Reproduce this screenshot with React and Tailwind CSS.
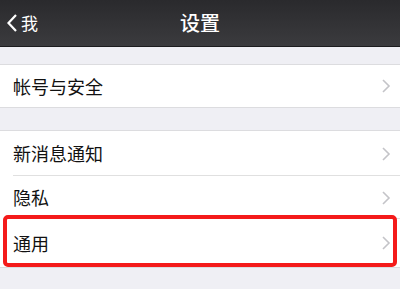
import React from "react";

const Chevron = () => (
  <svg width="10" height="16" viewBox="0 0 10 16" className="shrink-0">
    <path d="M2 2l6 6-6 6" fill="none" stroke="#c4c4c8" strokeWidth="1.6" />
  </svg>
);

const Row = ({ label, divider }) => (
  <div className="relative flex h-full items-center justify-between bg-white pl-[13px] pr-[9px]">
    <span className="text-[18px] text-[#111]">{label}</span>
    <Chevron />
    {divider && <div className="absolute bottom-0 left-[13px] right-0 h-px bg-[#e0e0e0]" />}
  </div>
);

const App = () => {
  return (
    <div
      className="h-[289px] w-[400px] overflow-hidden bg-[#efeff4]"
      style={{ fontFamily: '"Noto Sans CJK SC", "Noto Sans", sans-serif' }}
    >
      <header className="relative flex h-[47px] items-center justify-center border-b border-[#1c1c1e] bg-gradient-to-b from-[#2a2a2d] to-[#3b3b3e]">
        <div className="absolute left-[6px] top-0 flex h-full items-center gap-[3px]">
          <svg width="12" height="20" viewBox="0 0 12 20">
            <path d="M10 2L2.5 10 10 18" fill="none" stroke="#fff" strokeWidth="2.2" />
          </svg>
          <span className="text-[17px] text-white">我</span>
        </div>
        <h1 className="text-[20px] font-medium text-white">设置</h1>
      </header>

      <div className="mt-[17px] h-[44px] border-y border-[#dcdcdf]">
        <Row label="帐号与安全" />
      </div>

      <div className="mt-[22px] border-y border-[#dcdcdf]">
        <div className="h-[45px]">
          <Row label="新消息通知" divider />
        </div>
        <div className="h-[43px]">
          <Row label="隐私" divider />
        </div>
        <div className="relative h-[48px]">
          <Row label="通用" />
          <div className="absolute -top-[4px] left-[3px] right-[3px] bottom-0 rounded-[5px] border-[4px] border-[#f41a1a]" />
        </div>
      </div>
    </div>
  );
};

export default App;
